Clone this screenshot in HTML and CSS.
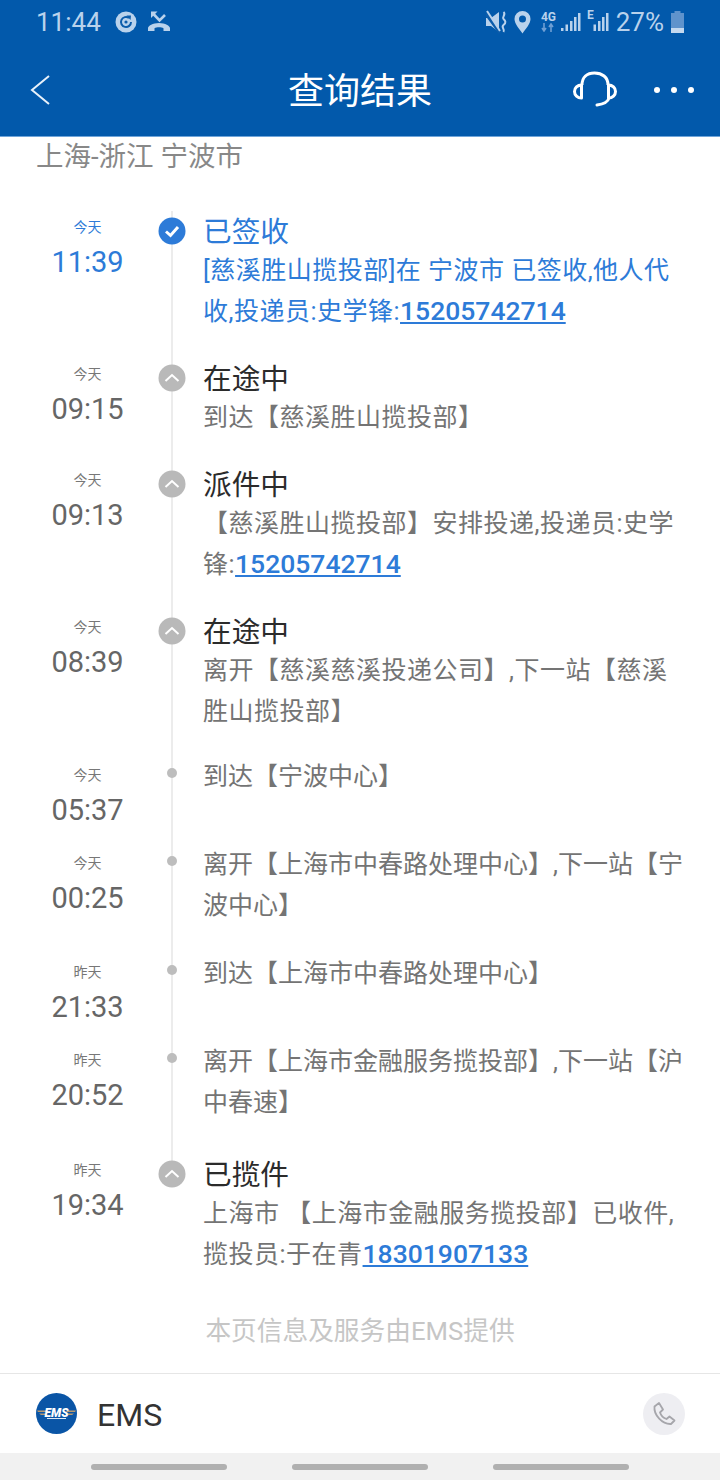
FILE: index.html
```html
<!DOCTYPE html>
<html lang="zh-CN">
<head>
<meta charset="utf-8">
<title>查询结果</title>
<link rel="stylesheet" href="styles.css">
</head>
<body>
<div class="app">
  <header class="header">
    <div class="status">
      <div class="status-side">
        <span class="clock">11:44</span>
        <svg class="ico" width="22" height="22" viewBox="0 0 22 22"><circle cx="11" cy="11" r="10.500" fill="#b9d2ec"/><path d="M16 11a5 5 0 1 1-2-4" fill="none" stroke="#0b5cab" stroke-width="2"/><path d="M11.500 4.500l4.500 0-0.500 4.500z" fill="#0b5cab"/><circle cx="11" cy="11" r="1.600" fill="#0b5cab"/></svg>
        <svg class="ico missed" width="24" height="24" viewBox="0 0 24 24"><path d="M5.500 3l7 7.500L18 5" fill="none" stroke="#b9d2ec" stroke-width="2.600"/><path d="M4 1.500h6.500L4 8z" fill="#b9d2ec"/><path d="M1 21v-2.800c0-2.200 4.800-5.200 11-5.200s11 3 11 5.200V21h-6.500v-2.800c-2-1.200-7-1.200-9 0V21z" fill="#b9d2ec"/></svg>
      </div>
      <div class="status-side">
        <svg class="ico" width="22" height="24" viewBox="0 0 22 24"><path d="M0 8h5l8-6v20l-8-6H0z" fill="#b9d2ec"/><path d="M0 4l14 19" stroke="#0b5cab" stroke-width="3"/><path d="M1 1l13 20" stroke="#b9d2ec" stroke-width="2"/><path d="M17.500 2c3 2.500-2 5 0 7s3 3.500 0 6 2 4 0 7" fill="none" stroke="#b9d2ec" stroke-width="2"/></svg>
        <svg class="ico pin" width="17" height="24" viewBox="0 0 17 24"><path fill-rule="evenodd" d="M8.500 1a8 8 0 0 1 8 8c0 5-5 10-8 14.500-3-4.500-8-9.500-8-14.500a8 8 0 0 1 8-8zm0 4.500a3.500 3.500 0 1 0 0 7 3.500 3.500 0 0 0 0-7z" fill="#b9d2ec"/></svg>
        <span class="net"><span class="net-label">4G</span><svg width="14" height="9" viewBox="0 0 14 9"><path d="M3 0v7M1 5l2 3 2-3" fill="none" stroke="#6f9fd4" stroke-width="1.600"/><path d="M10 9V2M8 4l2-3 2 3" fill="none" stroke="#6f9fd4" stroke-width="1.600"/></svg></span>
        <svg class="bars" width="20" height="20" viewBox="0 0 20 20"><path d="M0 16h2.500v3H0zM4.500 12.500H7V19H4.500zM9 9h2.500v10H9zM13 5h2.500v14H13zM17 1h2.500v18H17z" fill="#b9d2ec"/></svg>
        <span class="net-e">E</span>
        <svg class="bars bars-e" width="20" height="20" viewBox="0 0 20 20"><path d="M4.500 12.500H7V19H4.500zM9 9h2.500v10H9zM13 5h2.500v14H13zM17 1h2.500v18H17z" fill="#b9d2ec"/></svg>
        <span class="pct">27%</span>
        <svg class="ico" width="15" height="22" viewBox="0 0 15 22"><path d="M4.500 0h6v2H4.500zM1 2h13v20H1z" fill="#5f93cc"/><path d="M1 17h13v5H1z" fill="#c5d9ef"/></svg>
      </div>
    </div>
    <nav class="nav">
      <svg class="back" width="24" height="32" viewBox="0 0 24 32"><path d="M20 2L3 16l17 14" fill="none" stroke="#e8f1fa" stroke-width="2"/></svg>
      <h1 class="title">查询结果</h1>
      <div class="nav-actions">
        <svg class="headset" width="46" height="36" viewBox="0 0 46 36"><path d="M10 14C10 6 15 2 22.500 2S36 6 36 14" fill="none" stroke="#fff" stroke-width="3"/><path d="M9.500 14c-4 0-7 3-7 6.500s3 6.500 7 6.500zM36.500 14c4 0 7 3 7 6.500s-3 6.500-7 6.500z" fill="none" stroke="#fff" stroke-width="3" stroke-linejoin="round"/><path d="M37 27c-1 4-5 6-12 7" fill="none" stroke="#fff" stroke-width="3" stroke-linecap="round"/></svg>
        <span class="dots"><i></i><i></i><i></i></span>
      </div>
    </nav>
  </header>

  <main class="main">
    <p class="route">上海-浙江 宁波市</p>
    <ol class="timeline">
      <li class="row big active">
        <div class="when"><span class="day">今天</span><span class="time">11:39</span></div>
        <div class="node"><svg class="badge" width="28" height="28" viewBox="0 0 28 28"><circle cx="14" cy="14" r="13.500" fill="#2d7bd8"/><path d="M8 14.500l4.500 4L20 10" fill="none" stroke="#fff" stroke-width="3"/></svg></div>
        <div class="info"><h2 class="state">已签收</h2><p class="desc wide">[慈溪胜山揽投部]在 宁波市 已签收,他人代<br>收,投递员:史学锋:<a class="tel">15205742714</a></p></div>
      </li>
      <li class="row big">
        <div class="when"><span class="day">今天</span><span class="time">09:15</span></div>
        <div class="node"><svg class="badge" width="28" height="28" viewBox="0 0 28 28"><circle cx="14" cy="14" r="13.500" fill="#b9b9b9"/><path d="M7.500 17l6.500-6 6.500 6" fill="none" stroke="#fff" stroke-width="2"/></svg></div>
        <div class="info"><h2 class="state">在途中</h2><p class="desc wide">到达【慈溪胜山揽投部】</p></div>
      </li>
      <li class="row big">
        <div class="when"><span class="day">今天</span><span class="time">09:13</span></div>
        <div class="node"><svg class="badge" width="28" height="28" viewBox="0 0 28 28"><circle cx="14" cy="14" r="13.500" fill="#b9b9b9"/><path d="M7.500 17l6.500-6 6.500 6" fill="none" stroke="#fff" stroke-width="2"/></svg></div>
        <div class="info"><h2 class="state">派件中</h2><p class="desc wide">【慈溪胜山揽投部】安排投递,投递员:史学<br>锋:<a class="tel">15205742714</a></p></div>
      </li>
      <li class="row big">
        <div class="when"><span class="day">今天</span><span class="time">08:39</span></div>
        <div class="node"><svg class="badge" width="28" height="28" viewBox="0 0 28 28"><circle cx="14" cy="14" r="13.500" fill="#b9b9b9"/><path d="M7.500 17l6.500-6 6.500 6" fill="none" stroke="#fff" stroke-width="2"/></svg></div>
        <div class="info"><h2 class="state">在途中</h2><p class="desc wide">离开【慈溪慈溪投递公司】,下一站【慈溪<br>胜山揽投部】</p></div>
      </li>
      <li class="row plain">
        <div class="when"><span class="day">今天</span><span class="time">05:37</span></div>
        <div class="node"><span class="dot"></span></div>
        <div class="info"><p class="desc">到达【宁波中心】</p></div>
      </li>
      <li class="row plain">
        <div class="when"><span class="day">今天</span><span class="time">00:25</span></div>
        <div class="node"><span class="dot"></span></div>
        <div class="info"><p class="desc">离开【上海市中春路处理中心】,下一站【宁<br>波中心】</p></div>
      </li>
      <li class="row plain">
        <div class="when"><span class="day">昨天</span><span class="time">21:33</span></div>
        <div class="node"><span class="dot"></span></div>
        <div class="info"><p class="desc">到达【上海市中春路处理中心】</p></div>
      </li>
      <li class="row plain">
        <div class="when"><span class="day">昨天</span><span class="time">20:52</span></div>
        <div class="node"><span class="dot"></span></div>
        <div class="info"><p class="desc">离开【上海市金融服务揽投部】,下一站【沪<br>中春速】</p></div>
      </li>
      <li class="row big last">
        <div class="when"><span class="day">昨天</span><span class="time">19:34</span></div>
        <div class="node"><svg class="badge" width="28" height="28" viewBox="0 0 28 28"><circle cx="14" cy="14" r="13.500" fill="#b9b9b9"/><path d="M7.500 17l6.500-6 6.500 6" fill="none" stroke="#fff" stroke-width="2"/></svg></div>
        <div class="info"><h2 class="state">已揽件</h2><p class="desc wide">上海市 【上海市金融服务揽投部】已收件,<br>揽投员:于在青<a class="tel">18301907133</a></p></div>
      </li>
    </ol>
    <p class="source">本页信息及服务由EMS提供</p>
  </main>

  <footer class="carrier">
    <svg class="logo" width="41" height="41" viewBox="0 0 41 41"><circle cx="20.500" cy="20.500" r="20.500" fill="#0a55a6"/><path d="M1 17.500h9l1 1.500H2zM40 17.500h-9l-1 1.500h9zM3 20.500h7l1 1.500H5zM38 20.500h-7l-1 1.500h6z" fill="#b79a72"/><text x="20.500" y="24" text-anchor="middle" class="logo-text">EMS</text><path d="M11 25.500h19" stroke="#dfe9f4" stroke-width="1"/></svg>
    <span class="carrier-name">EMS</span>
    <span class="call"><svg width="24" height="25" viewBox="0 0 24 25"><path d="M2.500 5.500L7 2l4 6.500-3 3c1 3 3.500 5.500 6.500 6.500l3-2.500 5 4-3.500 3.500C10.500 23.500 1.500 14 2.500 5.500z" fill="none" stroke="#a6a6ab" stroke-width="1.800" stroke-linejoin="round"/></svg></span>
  </footer>
  <div class="gesture"><i></i><i></i><i></i></div>
</div>
</body>
</html>
```
FILE: styles.css
```css
* { box-sizing: border-box; }
html, body { margin: 0; padding: 0; }
body {
  width: 720px;
  height: 1480px;
  overflow: hidden;
  background: #fff;
  font-family: Roboto, "Noto Sans CJK SC", sans-serif;
}
.app { display: flex; flex-direction: column; height: 1480px; }

.header {
  height: 137px;
  background: #0259ab;
  border-bottom: 1px solid #6fa5da;
  flex: none;
}
.status {
  height: 43px;
  padding: 0 35px 0 36px;
  display: flex;
  justify-content: space-between;
  align-items: center;
  color: #b9d2ec;
}
.status-side { display: flex; align-items: center; }
.clock { font-size: 26px; margin-right: 14px; }
.missed { margin-left: 10px; }
.pin { margin-left: 6px; }
.net { display: flex; flex-direction: column; align-items: center; margin-left: 10px; line-height: 1; }
.net-label { font-size: 12px; font-weight: 700; height: 12px; line-height: 12px; }
.bars { margin-left: 5px; }
.net-e { font-size: 12px; font-weight: 700; margin-left: 6px; align-self: flex-start; line-height: 14px; margin-top: 1px; }
.bars-e { margin-left: -5px; }
.pct { font-size: 26px; margin: 0 6px 0 7px; }
.nav {
  height: 93px;
  position: relative;
  display: flex;
  align-items: center;
  justify-content: space-between;
  padding: 0 26px 0 29px;
}
.back { display: block; }
.title {
  margin: 0;
  font-size: 36px;
  font-weight: 400;
  color: #fff;
  position: absolute;
  left: 0;
  right: 0;
  top: 26px;
  line-height: 46px;
  text-align: center;
}
.nav-actions { display: flex; align-items: center; gap: 36px; }
.headset { display: block; margin-top: -1px; }
.dots { display: flex; gap: 11px; }
.dots i { width: 6px; height: 6px; border-radius: 50%; background: #fff; }

.main { flex: 1; min-height: 0; }
.route {
  margin: 0;
  height: 74px;
  padding: 1px 0 0 36px;
  font-size: 27.500px;
  line-height: 38px;
  color: #888;
}
.timeline { list-style: none; margin: 0; padding: 0; }
.row {
  position: relative;
  display: grid;
  grid-template-columns: 175px 29px 1fr;
  padding-right: 20px;
}
.row.big { padding-bottom: 26px; }
.row.plain { padding-bottom: 17px; }
.big + .plain, .plain + .big { margin-top: 1px; }
.row::before {
  content: "";
  position: absolute;
  left: 171px;
  top: 0;
  bottom: 0;
  width: 2px;
  background: #ececec;
}
.big + .plain::before, .plain + .big::before { top: -1px; }
.row.last::before { bottom: auto; height: 20px; }
.when { display: flex; flex-direction: column; align-items: center; }
.day { font-size: 14px; line-height: 20px; margin-top: 6px; color: #777; }
.time { font-size: 29px; line-height: 40px; margin-top: 5px; color: #666; }
.node {
  position: absolute;
  left: 158px;
  top: 6px;
  width: 28px;
  height: 28px;
}
.badge { display: block; }
.dot {
  position: absolute;
  left: 9px;
  top: 3px;
  width: 10px;
  height: 10px;
  border-radius: 50%;
  background: #bdbdbd;
}
.info { grid-column: 2 / 4; padding-left: 28px; }
.plain .info { padding-bottom: 13px; }
.state {
  margin: 0;
  padding-top: 2px;
  font-size: 28.700px;
  font-weight: 400;
  line-height: 38px;
  color: #2b2b2b;
}
.desc {
  margin: -1px 0 0;
  font-size: 25px;
  line-height: 41px;
  color: #747474;
}
.desc.wide { letter-spacing: 0.5px; }
.plain .desc { margin-top: -3px; }
.tel {
  font-size: 26.500px;
  line-height: 1;
  font-weight: 500;
  letter-spacing: 0;
  color: #2d7bd8;
  text-decoration: underline;
}
.active .day, .active .time, .active .state, .active .desc { color: #2d7bd8; }
.source {
  margin: 13px 0 0;
  text-align: center;
  font-size: 25.700px;
  line-height: 34px;
  color: #c6c6c6;
}

.carrier {
  flex: none;
  height: 80px;
  border-top: 1px solid #e6e6e6;
  display: flex;
  align-items: center;
  padding: 0 36px;
}
.logo { display: block; flex: none; }
.logo-text { font-family: Roboto, sans-serif; font-size: 12px; font-weight: 900; font-style: italic; fill: #fff; }
.carrier-name { font-size: 32px; color: #333; margin: 2px 0 0 20px; }
.call {
  margin-left: auto;
  margin-right: -1px;
  width: 42px;
  height: 42px;
  border-radius: 50%;
  background: #eeeef2;
  display: flex;
  align-items: center;
  justify-content: center;
}
.gesture {
  flex: none;
  height: 27px;
  background: #f1f1f1;
  display: flex;
  align-items: center;
  justify-content: space-between;
  padding: 0 91px;
}
.gesture i { width: 136px; height: 6px; border-radius: 3px; background: #b0b0b0; }
```
